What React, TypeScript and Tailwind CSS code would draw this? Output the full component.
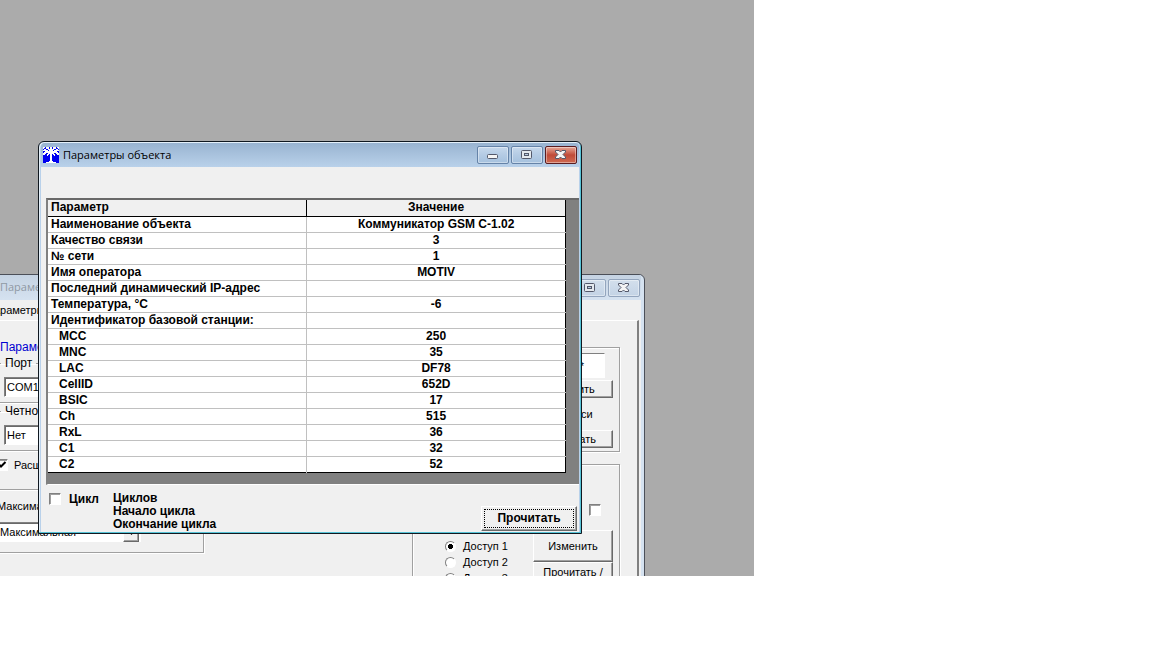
import React, { JSX, ReactNode } from 'react';

const rows = [
  { name: 'Наименование объекта', value: 'Коммуникатор GSM C-1.02' },
  { name: 'Качество связи', value: '3' },
  { name: '№ сети', value: '1' },
  { name: 'Имя оператора', value: 'MOTIV' },
  { name: 'Последний динамический IP-адрес', value: '' },
  { name: 'Температура, °C', value: '-6' },
  { name: 'Идентификатор базовой станции:', value: '' },
  { name: 'MCC', value: '250', child: true },
  { name: 'MNC', value: '35', child: true },
  { name: 'LAC', value: 'DF78', child: true },
  { name: 'CellID', value: '652D', child: true },
  { name: 'BSIC', value: '17', child: true },
  { name: 'Ch', value: '515', child: true },
  { name: 'RxL', value: '36', child: true },
  { name: 'C1', value: '32', child: true },
  { name: 'C2', value: '52', child: true },
];

const sunken = 'border border-t-[#808080] border-l-[#808080] border-b-white border-r-white bg-white';
const raised = 'border border-t-white border-l-white border-b-[#696969] border-r-[#696969] bg-[#f0f0f0] shadow-[inset_-1px_-1px_0_#a0a0a0]';
const group = 'border border-[#a0a0a0] shadow-[1px_1px_0_#fff,inset_1px_1px_0_#fff]';

const palm = [
  '##.###.##.###.##',
  '#..###.##.###..#',
  '.##..######..##.',
  '#####.####.#####',
  '..############..',
  '.##############.',
  '###..######..###',
  '##..##.##.##..##',
  '....#..##..#....',
  '.......##.......',
  '.......##.......',
  '.......##.......',
  '.......##.......',
  '.......##.......',
  '......####......',
  '...##########...',
];

const AppIcon = (): JSX.Element => (
  <svg width="16" height="16" viewBox="0 0 16 16" shapeRendering="crispEdges" aria-hidden="true">
    <rect width="16" height="16" fill="#0000f0" />
    {palm.map((line, y) =>
      line.split('').map((dot, x) => dot === '#' && <rect key={`${x}-${y}`} x={x} y={y} width="1" height="1" fill="#fff" />)
    )}
  </svg>
);

const Glyph = ({ kind }: { kind: string }): JSX.Element => (
  <svg width="14" height="12" viewBox="0 0 14 12" aria-hidden="true">
    {kind === 'min' && <rect x="1.5" y="5.5" width="10" height="4" rx="1" fill="#f4f4f4" stroke="#53586a" />}
    {kind === 'max' && (
      <>
        <rect x="1.5" y="1.5" width="10" height="8" rx="1" fill="#e4e9ee" stroke="#53586a" />
        <rect x="4.5" y="4.5" width="4" height="2" fill="#b9cde2" stroke="#53586a" />
      </>
    )}
    {kind === 'close' && (
      <path
        d="M1.5 1.5h3.5l1.5 1.5 1.5-1.5h3.5v1.5L9 5.5l2.5 2.5v1.5H8L6.5 8 5 9.5H1.5V8L4 5.5 1.5 3z"
        fill="#f4f4f4"
        stroke="#53586a"
      />
    )}
  </svg>
);

const TitleButtons = ({ active }: { active?: boolean }): JSX.Element => {
  const plain = active
    ? 'border-[#6583a8] bg-linear-to-b from-[#c6d8ec] via-[#b4cbe4] to-[#a5c1de]'
    : 'border-[#93a5bd] bg-linear-to-b from-[#d3dfec] to-[#c3d3e5]';
  const close = active ? 'border-[#5a1c20] bg-linear-to-b from-[#e5a798] via-[#c04a38] to-[#cf6a52]' : plain;
  const base = 'flex h-[18px] w-8 items-center justify-center rounded-xs border shadow-[inset_0_0_0_1px_#ffffff66]';
  return (
    <div className="flex gap-0.5">
      <button aria-label="Свернуть" className={`${base} ${plain}`}><Glyph kind="min" /></button>
      <button aria-label="Развернуть" className={`${base} ${plain}`}><Glyph kind="max" /></button>
      <button aria-label="Закрыть" className={`${base} ${close}`}><Glyph kind="close" /></button>
    </div>
  );
};

const CheckBox = ({ id, checked, label }: { id: string; checked?: boolean; label?: string }): JSX.Element => (
  <span className="relative flex">
    <input
      id={id}
      type="checkbox"
      aria-label={label}
      defaultChecked={checked}
      className={`peer h-3 w-3 appearance-none shadow-[inset_1px_1px_0_#a0a0a0] ${sunken}`}
    />
    <svg className="pointer-events-none absolute top-0 left-0 hidden peer-checked:block" width="12" height="12" viewBox="0 0 12 12">
      <path d="M3 5.5l2 2 4.5-4.5" fill="none" stroke="#000" strokeWidth="2" />
    </svg>
  </span>
);

const DropDown = ({ label, value, className }: { label: string; value: string; className: string }): JSX.Element => (
  <div className={`relative ${className}`}>
    <select aria-label={label} className={`h-5 w-full appearance-none px-0.5 shadow-[inset_1px_1px_0_#696969] ${sunken}`}>
      <option>{value}</option>
    </select>
    <span className={`pointer-events-none absolute top-0.5 right-0.5 flex h-[18px] w-4 items-center justify-center ${raised}`}>
      <svg width="7" height="4" viewBox="0 0 7 4"><path d="M0 0h7L3.5 4z" /></svg>
    </span>
  </div>
);

const PushButton = ({ children, className }: { children: ReactNode; className: string }): JSX.Element => (
  <button className={`w-full ${raised} ${className}`}>{children}</button>
);

const SettingsWindow = (): JSX.Element => (
  <section className="absolute top-[274px] -bottom-10 -left-5 flex w-[665px] flex-col rounded-t-md border border-[#4b4f58] bg-[#d5e2f0] pr-[3px] pl-[3px] text-[11px]">
    <header className="flex h-[25px] items-center justify-between bg-linear-to-b from-[#c5d3e3] to-[#d5e2f0] pr-px pl-4">
      <h2 className="font-['Open_Sans',sans-serif] text-[#8f98a3]">Параметры</h2>
      <TitleButtons />
    </header>
    <div className="flex flex-1 flex-col bg-[#f0f0f0] pr-0.5">
      <div className="h-5 pl-0.5 leading-5">Параметры</div>
      <div className="flex flex-1 justify-between border-t border-r-2 border-t-white border-r-[#808080] pr-[17px]">
        <div className="w-[220px] pt-4">
          <h3 className="pl-4 text-[12px] leading-5 text-[#0000d0]">Параметры</h3>
          <fieldset className={`mb-0.5 ml-3 h-[46px] px-1 ${group}`}>
            <legend className="px-1 text-[12px] leading-3">Порт</legend>
            <DropDown label="Порт" value="COM1" className="mt-2 ml-[3px] w-[100px]" />
          </fieldset>
          <fieldset className={`mb-0.5 ml-3 h-[46px] px-1 ${group}`}>
            <legend className="px-1 text-[12px] leading-3">Четность</legend>
            <DropDown label="Четность" value="Нет" className="mt-2 ml-[3px] w-[100px]" />
          </fieldset>
          <div className="mt-1 flex h-5 items-center gap-1.5 pl-3">
            <CheckBox id="extended" checked />
            <label htmlFor="extended">Расширенный</label>
          </div>
          <div className={`mt-3.5 h-16 pt-2 pl-3 ${group}`}>
            <div className="mb-2 leading-4">Максимальная</div>
            <DropDown label="Скорость" value="Максимальная" className="w-[144px]" />
          </div>
        </div>
        <div className="flex w-[208px] flex-col items-stretch gap-3 pt-[26px]">
          <div className={`h-[105px] pt-[5px] pr-1.5 pl-[119px] ${group}`}>
            <div className="pr-2">
              <input aria-label="Пароль" defaultValue="***********" className={`mb-0.5 h-[25px] w-full px-1 ${sunken}`} />
            </div>
            <PushButton className="h-[18px] leading-4">Сменить</PushButton>
            <div className="py-2 pl-1 text-center leading-4">Записи</div>
            <PushButton className="h-[18px] leading-4">Записать</PushButton>
          </div>
          <div className={`flex-1 pt-[39px] pr-1.5 pl-8 ${group}`}>
            <div className="mb-3.5 flex justify-end pr-3">
              <CheckBox id="access" label="Доступ" />
            </div>
            <div className="flex justify-between">
              <div className="pt-2">
                {['Доступ 1', 'Доступ 2', 'Доступ 3'].map((item, i) => (
                  <label key={item} className="flex h-4 items-center gap-[7px]">
                    <input
                      type="radio"
                      name="access-level"
                      defaultChecked={i === 0}
                      className={`h-[11px] w-[11px] appearance-none rounded-full checked:bg-radial checked:from-black checked:from-35% checked:to-white checked:to-40% ${sunken}`}
                    />
                    {item}
                  </label>
                ))}
              </div>
              <div className="w-20">
                <PushButton className="h-8">Изменить</PushButton>
                <PushButton className="h-8 leading-3">Прочитать / Записать</PushButton>
              </div>
            </div>
          </div>
        </div>
      </div>
    </div>
  </section>
);

const ObjectDialog = (): JSX.Element => (
  <section className="absolute top-[141px] left-[38px] w-[544px] rounded-t-md border border-[#101820] bg-[#b9d1ea] pr-0.5 pb-px pl-0.5 font-bold shadow-[inset_-1px_-1px_0_#56c3d6,inset_1px_1px_0_#e4f0fa]">
    <header className="mt-px flex h-6 items-center justify-between rounded-t-sm bg-linear-to-b from-[#99b4d1] to-[#b9d1ea] pr-0.5 pl-0.5">
      <div className="flex items-center gap-1">
        <AppIcon />
        <h1 className="font-['Open_Sans',sans-serif] text-[11px] font-normal">Параметры объекта</h1>
      </div>
      <TitleButtons active />
    </header>
    <div className="bg-[#f0f0f0] pt-[31px] pl-[5px]">
      <div className="border-t-2 border-b border-l-2 border-t-[#696969] border-b-white border-l-[#808080] bg-[#808080] pr-[13px] pb-[11px]">
        <table className="w-full table-fixed border-collapse border-r border-b border-black bg-white">
          <thead>
            <tr className="h-4 bg-[#f0f0f0]">
              <th className="border-r border-b border-black p-0 pl-[3px] text-left leading-[15px]">Параметр</th>
              <th className="border-b border-black p-0 text-center leading-[15px]">Значение</th>
            </tr>
          </thead>
          <tbody>
            {rows.map((row) => (
              <tr key={row.name} className="h-4 border-b border-[#c0c0c0] last:border-black">
                <td className={`border-r border-[#c0c0c0] p-0 leading-[15px] ${row.child ? 'pl-[11px]' : 'pl-[3px]'}`}>{row.name}</td>
                <td className="p-0 text-center leading-[15px]">{row.value}</td>
              </tr>
            ))}
          </tbody>
        </table>
      </div>
      <footer className="flex h-[47px] items-start pr-0.5">
        <div className="flex w-[67px] items-center gap-2 pt-1.5 pl-[3px] leading-4">
          <CheckBox id="cycle" />
          <label htmlFor="cycle">Цикл</label>
        </div>
        <div className="flex-1 pt-[7px] leading-[13px]">
          <p>Циклов</p>
          <p>Начало цикла</p>
          <p>Окончание цикла</p>
        </div>
        <button className={`mt-[21px] h-[25px] w-24 p-0.5 ${raised}`}>
          <span className="flex h-full items-center justify-center border border-dotted border-black">Прочитать</span>
        </button>
      </footer>
    </div>
  </section>
);

const App = (): JSX.Element => {
  return (
    <div className="flex min-h-screen bg-white pr-[398px] pb-[72px] font-['Liberation_Sans',Arial,sans-serif] text-[12px] text-black">
      <main className="relative flex-1 overflow-hidden bg-[#ababab]">
        <SettingsWindow />
        <ObjectDialog />
      </main>
    </div>
  );
}

export default App;
